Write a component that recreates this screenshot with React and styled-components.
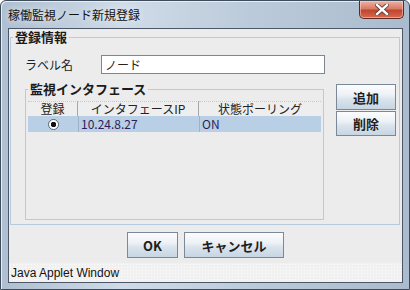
import React from 'react';
import styled, { createGlobalStyle } from 'styled-components';

const Global = createGlobalStyle`
  html, body { margin: 0; padding: 0; background: #ffffff; }
  * { box-sizing: border-box; }
`;

const jp = `"Noto Sans CJK JP", "DejaVu Sans", sans-serif`;

const Frame = styled.div`
  width: 410px;
  height: 290px;
  display: flex;
  flex-direction: column;
  padding: 0 6px 6px 7px;
  border: 1px solid #3f4c5b;
  border-radius: 6px 6px 0 0;
  background: linear-gradient(90deg, #aebfd1 0%, #cfdbe7 30%, #bccbdb 60%, #a9bbcd 100%);
  box-shadow: inset 1px 1px 0 #e6edf4;
  font-family: ${jp};
`;

const TitleBar = styled.div`
  height: 27px;
  display: flex;
  justify-content: space-between;
  align-items: flex-start;
`;

const Title = styled.div`
  padding-top: 6px;
  font-size: 12px;
  line-height: 15px;
  color: #111;
  text-shadow: 0 0 6px #f2f6fa;
`;

const CloseBox = styled.div`
  width: 45px;
  height: 18px;
  margin-right: -1px;
  border: 1px solid #5c2a22;
  border-top: none;
  border-radius: 0 0 5px 5px;
  background: linear-gradient(180deg, #efb3a4 0%, #d87a66 45%, #c0452f 55%, #d86a50 100%);
  display: flex;
  align-items: center;
  justify-content: center;
  box-shadow: inset 0 0 0 1px rgba(255, 220, 210, 0.5);
`;

const Client = styled.div`
  flex: 1;
  display: flex;
  flex-direction: column;
  border: 1px solid #4b5767;
  background: #ececec;
`;

const Group = styled.fieldset`
  margin: ${p => p.$outer ? '1px 2px 0 1px' : '0'};
  padding: 0;
  width: ${p => p.$width || 'auto'};
  height: ${p => p.$height};
  border: 1px solid #b7cbe0;
  display: flex;
  flex-direction: column;
  min-width: 0;
`;

const Legend = styled.legend`
  margin-left: 2px;
  padding: 0 2px;
  font-size: 13px;
  line-height: 14px;
  font-weight: bold;
  color: #1b1b1b;
`;

const Row = styled.div`
  display: flex;
  align-items: ${p => p.$align || 'center'};
  margin-top: ${p => p.$top}px;
  padding-left: 14px;
`;

const Label = styled.span`
  width: 76px;
  font-size: 12px;
  line-height: 19px;
  color: #222;
`;

const TextField = styled.div`
  width: 224px;
  height: 19px;
  border: 1px solid #7d8794;
  background: #fff;
  padding-left: 3px;
  font-size: 12px;
  line-height: 17px;
  color: #222;
`;

const Table = styled.div`
  margin: 5px 0 0 2px;
  width: 293px;
  display: grid;
  grid-template-columns: 50px 121px 122px;
`;

const HeadCell = styled.div`
  height: 15px;
  background: #eeeeee;
  border-top: 1px dotted #c8c8c8;
  border-right: ${p => p.$last ? 'none' : '1px solid #a6a6a6'};
  text-align: center;
  font-size: 12px;
  line-height: 14px;
  color: #222;
`;

const Cell = styled.div`
  height: 16px;
  background: #b8cfe5;
  padding-left: 2px;
  font-size: 12px;
  line-height: 16px;
  color: #2e1c5c;
  display: flex;
  align-items: center;
  justify-content: ${p => p.$center ? 'center' : 'flex-start'};
  border-left: ${p => p.$divider ? '1px solid #9fb3c8' : 'none'};
`;

const Radio = styled.span`
  width: 11px;
  height: 11px;
  border-radius: 50%;
  border: 1px solid #5b6470;
  background: radial-gradient(circle, #111 0 2.5px, #fff 3px);
  margin-left: -2px;
`;

const Side = styled.div`
  display: flex;
  flex-direction: column;
  gap: 1px;
  margin: 2px 0 0 12px;
`;

const Button = styled.button`
  width: ${p => p.$w}px;
  height: ${p => p.$h || 26}px;
  padding: 0;
  border: 1px solid #7b8898;
  background: linear-gradient(180deg, #fbfcfd 0%, #eef2f6 40%, #d9e3ec 60%, #c7d5e3 100%);
  font-family: ${jp};
  font-size: 13px;
  font-weight: bold;
  color: #1e1e1e;
`;

const ButtonRow = styled.div`
  height: 38px;
  display: flex;
  justify-content: center;
  gap: 6px;
  padding-top: 7px;
`;

const StatusBar = styled.div`
  height: 19px;
  padding: 2px 0 0 2px;
  background-color: #f1f1f1;
  background-image: radial-gradient(#fbfbfb 0.6px, transparent 0.7px);
  background-size: 3px 3px;
  font-family: "Liberation Sans", Arial, sans-serif;
  font-size: 12px;
  line-height: 16px;
  color: #111;
`;

export default function App() {
  return (
    <>
      <Global />
      <Frame>
        <TitleBar>
          <Title>稼働監視ノード新規登録</Title>
          <CloseBox>
            <svg width="14" height="11" viewBox="0 0 14 11">
              <path d="M2 1 L12 10 M12 1 L2 10" stroke="#5a3530" strokeWidth="4" strokeLinecap="square" />
              <path d="M2 1 L12 10 M12 1 L2 10" stroke="#ffffff" strokeWidth="2.4" strokeLinecap="square" />
            </svg>
          </CloseBox>
        </TitleBar>
        <Client>
          <Group $outer $height="195px">
            <Legend>登録情報</Legend>
            <Row $top={11}>
              <Label>ラベル名</Label>
              <TextField>ノード</TextField>
            </Row>
            <Row $top={8} $align="flex-start">
              <Group $width="299px" $height="138px">
                <Legend>監視インタフェース</Legend>
                <Table>
                  <HeadCell>登録</HeadCell>
                  <HeadCell>インタフェースIP</HeadCell>
                  <HeadCell $last>状態ポーリング</HeadCell>
                  <Cell $center><Radio /></Cell>
                  <Cell $divider>10.24.8.27</Cell>
                  <Cell $divider>ON</Cell>
                </Table>
              </Group>
              <Side>
                <Button $w={60}>追加</Button>
                <Button $w={60} $h={25}>削除</Button>
              </Side>
            </Row>
          </Group>
          <ButtonRow>
            <Button $w={51}>OK</Button>
            <Button $w={100}>キャンセル</Button>
          </ButtonRow>
          <StatusBar>Java Applet Window</StatusBar>
        </Client>
      </Frame>
    </>
  );
}
